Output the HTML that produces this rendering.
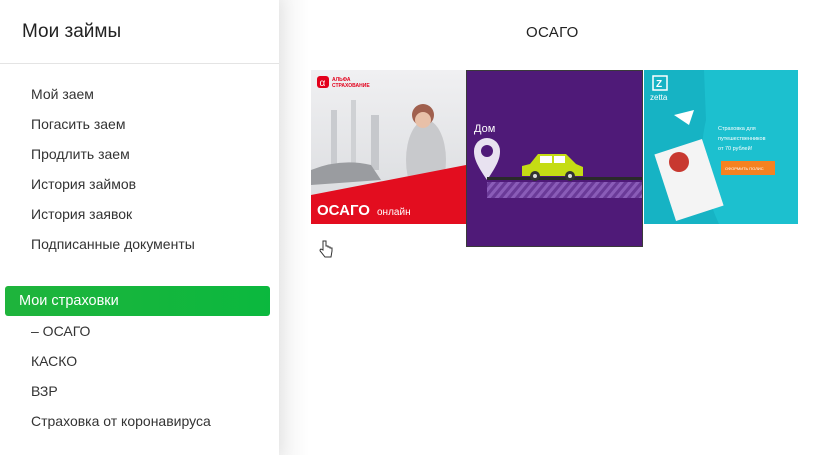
<!DOCTYPE html>
<html><head><meta charset="utf-8"><style>
*{margin:0;padding:0;box-sizing:border-box}
body{width:825px;height:455px;overflow:hidden;background:#fff;font-family:"Liberation Sans","DejaVu Sans",sans-serif;color:#2b2b2b;position:relative}
.side{position:absolute;left:0;top:0;width:279px;height:455px;background:#fff;box-shadow:4px 0 14px rgba(0,0,0,0.06)}
.shade{position:absolute;left:279px;top:0;width:30px;height:455px;background:linear-gradient(90deg,#f3f3f3,#fff)}
.h{position:absolute;left:22px;top:21px;font-size:19px;color:#222}
.line{position:absolute;left:0;top:63px;width:279px;height:1px;background:#e4e4e4}
.it{position:absolute;left:31px;font-size:14px;color:#333}
.act{position:absolute;left:5px;top:286px;width:265px;height:30px;border-radius:3px;background:linear-gradient(90deg,#1fb43c,#0bb83e);color:#fff;font-size:14.5px;padding:7px 0 0 14px}
.title{position:absolute;left:526px;top:24px;font-size:15px;color:#222;letter-spacing:.3px}
.b{position:absolute;overflow:hidden}
</style></head><body>
<div class="shade"></div>
<div class="side">
<div class="h">Мои займы</div>
<div class="line"></div>
<div class="it" style="top:86px">Мой заем</div>
<div class="it" style="top:116px">Погасить заем</div>
<div class="it" style="top:146px">Продлить заем</div>
<div class="it" style="top:176px">История займов</div>
<div class="it" style="top:206px">История заявок</div>
<div class="it" style="top:236px">Подписанные документы</div>
<div class="act">Мои страховки</div>
<div class="it" style="top:323px">– ОСАГО</div>
<div class="it" style="top:353px">КАСКО</div>
<div class="it" style="top:383px">ВЗР</div>
<div class="it" style="top:413px">Страховка от коронавируса</div>
</div>
<div class="title">ОСАГО</div>

<div class="b" style="left:311px;top:70px;width:155px;height:154px;background:linear-gradient(180deg,#f0f0f2,#d8dadd)">
<svg width="155" height="154" style="position:absolute;left:0;top:0">
<rect x="6" y="6" width="12" height="12" rx="3" fill="#e3001b"/>
<text x="8.5" y="16" font-size="10" fill="#fff" font-family="Liberation Sans">α</text>
<text x="21" y="11" font-size="5" fill="#e3001b" font-weight="bold" font-family="Liberation Sans">АЛЬФА</text>
<text x="21" y="17" font-size="5" fill="#e3001b" font-weight="bold" font-family="Liberation Sans">СТРАХОВАНИЕ</text>
<rect x="20" y="40" width="6" height="60" fill="#c9cbcf"/><rect x="40" y="30" width="5" height="70" fill="#cfd1d4"/><rect x="60" y="45" width="8" height="55" fill="#c6c8cc"/>
<ellipse cx="115" cy="90" rx="20" ry="40" fill="#c8c9cc"/>
<circle cx="112" cy="45" r="11" fill="#a0604e"/><circle cx="112" cy="50" r="8" fill="#e8c0a8"/>
<path d="M0 100 Q30 88 60 95 L70 110 L0 115Z" fill="#9a9ca0"/>
<path d="M0 125 L155 95 L155 154 L0 154Z" fill="#e30d1f"/>
<text x="6" y="145" font-size="15" fill="#fff" font-family="Liberation Sans" font-weight="bold">ОСАГО</text>
<text x="66" y="145" font-size="10" fill="#fff" font-family="Liberation Sans">онлайн</text>
</svg></div>

<div class="b" style="left:466px;top:70px;width:177px;height:177px;background:#4f1a78;border:1px solid #3a3a3a">
<svg width="177" height="177" style="position:absolute;left:-1px;top:-1px">
<defs><pattern id="st" width="8" height="16" patternUnits="userSpaceOnUse" patternTransform="skewX(-40)"><rect width="4" height="16" fill="#8a5cb8"/><rect x="4" width="4" height="16" fill="#6a3a98"/></pattern></defs>
<text x="8" y="62" font-size="11" fill="#fff" font-family="Liberation Sans">Дом</text>
<path d="M21 110 C10 94 8 88 8 81 A13 13 0 0 1 34 81 C34 88 32 94 21 110Z" fill="#e8e2f0"/>
<circle cx="21" cy="81" r="6" fill="#4f1a78"/>
<rect x="21" y="107" width="156" height="3" fill="#2a2a2a"/>
<rect x="21" y="112" width="156" height="16" fill="url(#st)"/>
<path d="M56 106 L56 96 L64 94 L72 84 L100 84 L110 94 L117 97 L117 106Z" fill="#c5dc14"/>
<rect x="74" y="86" width="12" height="7" fill="#fff"/><rect x="88" y="86" width="11" height="7" fill="#fff"/>
<circle cx="69" cy="106" r="5" fill="#333"/><circle cx="104" cy="106" r="5" fill="#333"/>
<circle cx="69" cy="106" r="2" fill="#ddd"/><circle cx="104" cy="106" r="2" fill="#ddd"/>
</svg></div>

<div class="b" style="left:644px;top:70px;width:154px;height:154px;background:#16b3c4">
<svg width="154" height="154" style="position:absolute;left:0;top:0">
<path d="M60 0 L154 0 L154 154 L75 154 Q50 100 62 50Z" fill="#1cc0cf"/>
<rect x="9" y="6" width="14" height="14" fill="none" stroke="#fff" stroke-width="1.5"/>
<text x="12" y="17" font-size="10" fill="#fff" font-family="Liberation Sans" font-weight="bold">Z</text>
<text x="6" y="30" font-size="8" fill="#fff" font-family="Liberation Sans">zetta</text>
<path d="M30 45 L50 40 L45 55Z" fill="#fff"/>
<rect x="20" y="75" width="50" height="70" fill="#f4f4f4" transform="rotate(-18 45 110)"/>
<circle cx="35" cy="92" r="10" fill="#c83830"/>
<text x="74" y="60" font-size="5.5" fill="#fff" font-family="Liberation Sans">Страховка для</text>
<text x="74" y="70" font-size="5.5" fill="#fff" font-family="Liberation Sans">путешественников</text>
<text x="74" y="80" font-size="5.5" fill="#fff" font-family="Liberation Sans">от 70 рублей!</text>
<rect x="77" y="91" width="54" height="14" fill="#f58220"/>
<text x="81" y="100" font-size="4" fill="#fff" font-family="Liberation Sans">ОФОРМИТЬ ПОЛИС</text>
</svg></div>

<svg width="16" height="18" style="position:absolute;left:318px;top:240px"><path d="M5 1 L5 10 L3 9 Q1 10 3 12 L7 17 L13 17 L14 11 L14 8 L12 8 L12 7 L10 7 L10 6 L8 6 L8 1Z" fill="#fff" stroke="#333" stroke-width="1"/></svg>
</body></html>
